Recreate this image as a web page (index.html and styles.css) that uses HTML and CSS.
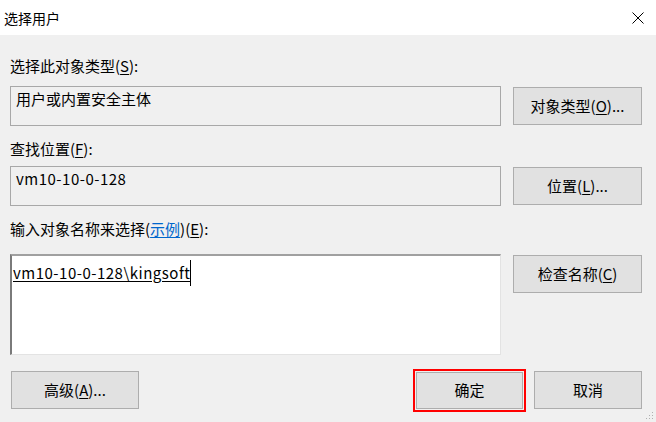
FILE: index.html
```html
<!DOCTYPE html>
<html lang="zh-CN">
<head>
<meta charset="utf-8">
<title>选择用户</title>
<link rel="stylesheet" href="styles.css">
</head>
<body>
<div class="dialog">
  <div class="titlebar">
    <span class="title">选择用户</span>
    <svg class="close" width="12" height="12" viewBox="0 0 12 12"><path d="M0.5 0.5L11.5 11.5M11.5 0.5L0.5 11.5" stroke="#000" stroke-width="1" fill="none"/></svg>
  </div>
  <div class="content">
    <div class="label l1">选择此对象类型(<u>S</u>):</div>
    <div class="row r1">
      <div class="field">用户或内置安全主体</div>
      <div class="btn side">对象类型(<u>O</u>)...</div>
    </div>
    <div class="label l2">查找位置(<u>F</u>):</div>
    <div class="row r2">
      <div class="field latin">vm10-10-0-128</div>
      <div class="btn side">位置(<u>L</u>)...</div>
    </div>
    <div class="label l3">输入对象名称来选择(<span class="link">示例</span>)(<u>E</u>):</div>
    <div class="row r3">
      <div class="area"><span class="entry latin">vm10-10-0-128\kingsoft</span><span class="caret"></span></div>
      <div class="btn side check">检查名称(<u>C</u>)</div>
    </div>
    <div class="footer">
      <div class="btn adv">高级(<u>A</u>)...</div>
      <div class="spacer"></div>
      <div class="btn ok">确定</div>
      <div class="btn cancel">取消</div>
    </div>
  </div>
  <svg class="grip" width="8" height="8" viewBox="0 0 8 8">
    <rect x="6" y="0" width="1" height="1" fill="#b0b0b0"/>
    <rect x="3" y="3" width="1" height="1" fill="#b0b0b0"/>
    <rect x="6" y="3" width="1" height="1" fill="#b0b0b0"/>
    <rect x="0" y="6" width="1" height="1" fill="#b0b0b0"/>
    <rect x="3" y="6" width="1" height="1" fill="#b0b0b0"/>
    <rect x="6" y="6" width="1" height="1" fill="#b0b0b0"/>
  </svg>
</div>
</body>
</html>
```

FILE: styles.css
```css
html, body {
  margin: 0;
  padding: 0;
}
body {
  width: 656px;
  height: 422px;
  overflow: hidden;
  background: #f0f0f0;
  font-family: "Noto Sans CJK SC", "Noto Sans", sans-serif;
  font-size: 15px;
  color: #000;
}
.dialog {
  position: relative;
  width: 656px;
  height: 422px;
}
.titlebar {
  height: 35px;
  background: #fff;
  display: flex;
  align-items: center;
  padding: 0 12px 0 4px;
}
.title {
  font-size: 14px;
  line-height: 20px;
  flex: 1;
}
.close {
  margin-top: 1px;
}
.content {
  padding: 0 14px 0 10px;
}
.label {
  line-height: 20px;
  height: 20px;
  white-space: nowrap;
}
.l1 { margin-top: 21px; }
.l2 { margin-top: 13px; }
.l3 { margin-top: 13px; }
.row {
  display: flex;
  gap: 12px;
  align-items: flex-start;
}
.r1 { margin-top: 10px; }
.r2 { margin-top: 7px; }
.r3 { margin-top: 15px; }
.field {
  width: 491px;
  height: 40px;
  box-sizing: border-box;
  border: 1px solid #a8a8a8;
  background: #f0f0f0;
  padding: 2px 5px;
  line-height: 20px;
  white-space: nowrap;
}
.latin {
  letter-spacing: 0.5px;
}
.area {
  width: 491px;
  height: 101px;
  box-sizing: border-box;
  background: #fff;
  border-top: 2px solid #a0a0a0;
  border-left: 2px solid #7a7a7a;
  border-right: 1px solid #e3e3e3;
  border-bottom: 1px solid #e3e3e3;
  padding: 7px 0 0 1px;
  line-height: 20px;
  white-space: nowrap;
  display: flex;
  align-items: flex-start;
}
.entry {
  text-decoration: underline;
  text-underline-offset: 2px;
}
.caret {
  display: inline-block;
  width: 1px;
  height: 26px;
  background: #000;
  margin-top: -3px;
}
.btn {
  box-sizing: border-box;
  height: 38px;
  background: #e1e1e1;
  border: 1px solid #adadad;
  display: flex;
  align-items: center;
  justify-content: center;
  white-space: nowrap;
  line-height: 20px;
}
.side {
  width: 129px;
  margin-top: 1px;
}
.check {
  margin-top: 1px;
}
u {
  text-underline-offset: 2px;
}
.link {
  color: #0066cc;
  text-decoration: underline;
  text-underline-offset: 2px;
}
.footer {
  display: flex;
  margin-top: 16px;
  align-items: center;
}
.adv {
  width: 128px;
  margin-left: 1px;
}
.spacer {
  flex: 1;
}
.ok {
  width: 107px;
  height: 37px;
  outline: 2px solid #ff0000;
  outline-offset: 1px;
  margin-right: 11px;
}
.cancel {
  width: 108px;
  margin-right: 0;
}
.grip {
  position: absolute;
  right: 2px;
  bottom: 2px;
}
```
